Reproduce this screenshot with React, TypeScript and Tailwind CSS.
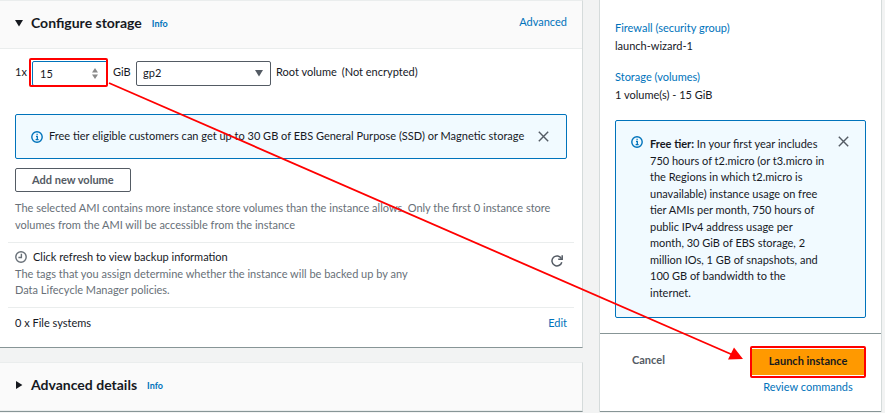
import type { ReactNode } from "react";

const linkClass = "text-[#0073bb] hover:underline";

function InfoIcon() {
  return (
    <svg viewBox="0 0 12 12" className="size-3 shrink-0" fill="none" stroke="#0073bb" aria-hidden="true">
      <circle cx="6" cy="6" r="5.2" strokeWidth="1.4" />
      <path d="M5 5.3h1.3v3M4.6 8.6h3M5.5 3.3h1.2" strokeWidth="1.3" />
    </svg>
  );
}

function CloseButton() {
  return (
    <button type="button" aria-label="Dismiss" className="size-[11px] shrink-0 text-[#545b64]">
      <svg viewBox="0 0 11 11" fill="none" stroke="currentColor" strokeWidth="1.4">
        <path d="M.8 .8l9.4 9.4M10.2 .8L.8 10.2" />
      </svg>
    </button>
  );
}

function Caret({ open }: { open: boolean }) {
  return (
    <svg viewBox="0 0 8 8" className="size-2 shrink-0" fill="#16191f" aria-hidden="true">
      <path d={open ? "M0 1h8L4 7.4z" : "M1 0v8L7.4 4z"} />
    </svg>
  );
}

function SectionHeader({ title, open, children }: { title: string; open: boolean; children?: ReactNode }) {
  return (
    <header className="flex h-12 items-center border-b border-[#eaeded] bg-[#fafafa] pr-[15px] pb-1 pl-[15px]">
      <button type="button" aria-expanded={open} className="flex items-center gap-2">
        <Caret open={open} />
        <h2 className="text-[14px] leading-5 font-bold">{title}</h2>
      </button>
      <a href="#info" className="ml-[10px] pt-0.5 text-[9px] font-bold text-[#0073bb]">
        Info
      </a>
      {children}
    </header>
  );
}

function SummaryItem({ label, value }: { label: string; value: string }) {
  return (
    <div className="flex flex-col gap-px">
      <dt>
        <a href="#summary" className={linkClass}>
          {label}
        </a>
      </dt>
      <dd>{value}</dd>
    </div>
  );
}

export default function App() {
  return (
    <div className="relative flex min-h-screen items-start gap-4 overflow-hidden bg-[#f2f3f3] pr-[3px] font-['Lato','Noto_Sans',sans-serif] text-[11px] leading-normal text-[#16191f]">
      <main className="flex min-w-0 flex-1 flex-col gap-[14px]">
        <section className="border-t border-r border-b border-t-[#eaeded] border-r-[#d5dbdb] border-b-[#879596] bg-white">
          <SectionHeader title="Configure storage" open>
            <a href="#advanced" className={`ml-auto ${linkClass}`}>
              Advanced
            </a>
          </SectionHeader>

          <div className="px-[15px] pt-3">
            <div className="flex items-start gap-[5px] leading-[22px]">
              <label htmlFor="size" className="w-3">
                1x
              </label>
              <div className="relative h-[25px] w-[76px]">
                <input
                  id="size"
                  type="number"
                  defaultValue={15}
                  className="size-full [appearance:textfield] rounded-xs border border-[#0073bb] bg-white px-[7px] outline-none [&::-webkit-inner-spin-button]:appearance-none"
                />
                <svg viewBox="0 0 6 11" className="pointer-events-none absolute top-[7px] right-[10px] h-[11px] w-[6px]" fill="#8a8a8a" aria-hidden="true">
                  <path d="M3 0l3 4.6H0zM3 11L0 6.4h6z" />
                </svg>
                <span className="pointer-events-none absolute -top-[3px] right-0 -bottom-px -left-[3px] rounded-xs border-2 border-[#ff0000]" />
              </div>
              <label htmlFor="type" className="w-[18px]">
                GiB
              </label>
              <div className="relative h-[25px] w-[135px]">
                <select id="type" defaultValue="gp2" className="size-full appearance-none rounded-xs border border-[#545b64] bg-white px-[6px] pb-0.5">
                  <option>gp2</option>
                  <option>gp3</option>
                </select>
                <svg viewBox="0 0 8 7" className="pointer-events-none absolute top-[9px] right-2 h-[7px] w-2" fill="#545b64" aria-hidden="true">
                  <path d="M0 0h8L4 6.6z" />
                </svg>
              </div>
              <span>Root volume</span>
              <span>(Not encrypted)</span>
            </div>

            <div className="mt-7 flex h-[45px] items-center gap-[6px] rounded-xs border border-[#0073bb] bg-[#f1faff] pr-[17px] pl-[15px]">
              <InfoIcon />
              <p className="mr-auto">
                Free tier eligible customers can get up to 30 GB of EBS General Purpose (SSD) or Magnetic storage
              </p>
              <CloseButton />
            </div>

            <button type="button" className="mt-[9px] h-6 rounded-xs border border-[#545b64] bg-white px-4 font-bold text-[#545b64]">
              Add new volume
            </button>

            <p className="mt-2 text-[#687078]">
              The selected AMI contains more instance store volumes than the instance allows. Only the first 0 instance store
              volumes from the AMI will be accessible from the instance
            </p>
          </div>

          <div className="mx-2 mt-[9px] flex h-[66px] items-start justify-between border-y border-[#eaeded] px-[7px] pt-[6px]">
            <div>
              <h3 className="flex items-center gap-[6px]">
                <svg viewBox="0 0 12 12" className="size-3" fill="none" stroke="#687078" strokeWidth="1.4" aria-hidden="true">
                  <circle cx="6" cy="6" r="5.2" />
                  <path d="M6.4 2.8v3.7H3.4" />
                </svg>
                Click refresh to view backup information
              </h3>
              <p className="max-w-[410px] text-[#687078]">
                The tags that you assign determine whether the instance will be backed up by any Data Lifecycle Manager
                policies.
              </p>
            </div>
            <button type="button" aria-label="Refresh" className="mt-[6px] mr-1 size-3 text-[#545b64]">
              <svg viewBox="0 0 12 12" fill="none" stroke="currentColor" strokeWidth="1.5">
                <path d="M10.8 7.2A5 5 0 1 1 10.4 3.6" />
                <path d="M11.2 .2v4.1H7.2" />
              </svg>
            </button>
          </div>

          <div className="flex h-[39px] items-start justify-between px-[15px] pt-[7px]">
            <span>0 x File systems</span>
            <a href="#edit" className={linkClass}>
              Edit
            </a>
          </div>
        </section>

        <section className="border-t border-r border-b border-t-[#eaeded] border-r-[#d5dbdb] border-b-[#879596] bg-white">
          <SectionHeader title="Advanced details" open={false} />
        </section>
      </main>

      <aside className="w-[283px] shrink-0 border-x border-[#d5dbdb] bg-white">
        <div className="border-b border-[#879596] px-[15px] pt-5 pb-[15px]">
          <dl className="flex flex-col gap-[15px]">
            <SummaryItem label="Firewall (security group)" value="launch-wizard-1" />
            <SummaryItem label="Storage (volumes)" value="1 volume(s) - 15 GiB" />
          </dl>
          <div className="mt-[17px] flex items-start rounded-xs border border-[#0073bb] bg-[#f1faff] pt-[15px] pr-4 pb-4 pl-[15px]">
            <InfoIcon />
            <p className="mr-auto ml-[7px] w-[178px]">
              <b>Free tier:</b> In your first year includes 750 hours of t2.micro (or t3.micro in the Regions in which
              t2.micro is unavailable) instance usage on free tier AMIs per month, 750 hours of public IPv4 address usage
              per month, 30 GiB of EBS storage, 2 million IOs, 1 GB of snapshots, and 100 GB of bandwidth to the internet.
            </p>
            <CloseButton />
          </div>
        </div>

        <div className="flex h-[78px] items-start justify-between border-b border-[#879596] pt-3 pr-[15px] pl-8">
          <button type="button" className="h-7 font-bold text-[#545b64]">
            Cancel
          </button>
          <div className="flex flex-col items-center gap-px">
            <div className="rounded-xs border-2 border-[#ff0000] bg-white py-px">
              <button type="button" className="h-[26px] w-28 bg-[#ff9900] pb-0.5 font-bold">
                Launch instance
              </button>
            </div>
            <a href="#review" className={linkClass}>
              Review commands
            </a>
          </div>
        </div>
      </aside>

      <svg className="pointer-events-none absolute top-0 left-0 h-[413px] w-[885px]" viewBox="0 0 885 413" fill="#ff0000" aria-hidden="true">
        <path d="M109 83L733 355" stroke="#ff0000" strokeWidth="1.8" />
        <path d="M743 359L728 359.500L734 347.500z" />
      </svg>
    </div>
  );
}
